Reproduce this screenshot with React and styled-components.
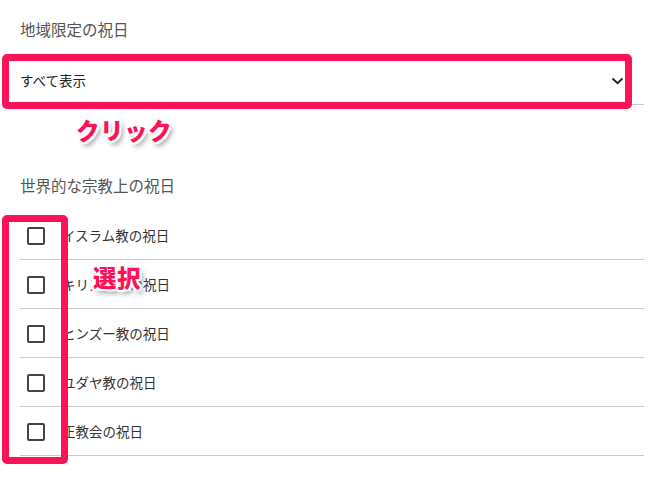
import React from 'react'
import styled, { createGlobalStyle } from 'styled-components'

const GlobalStyle = createGlobalStyle`
  body {
    margin: 0;
    background: #fff;
    font-family: "Noto Sans CJK JP", "Noto Sans", sans-serif;
  }
`

const PINK = '#ff1158'

const Page = styled.div`
  width: 648px;
  height: 478px;
  overflow: hidden;
`

const Form = styled.div`
  padding: 18px 4px 0 20px;
`

const Label = styled.div`
  font-size: 15.5px;
  line-height: 22px;
  color: #555;
  margin-top: ${p => p.top || 0}px;
`

// annotated blocks: the pink frame and note lie over them
const Annotated = styled.div`
  position: relative;
  margin-top: ${p => p.top || 0}px;
`

const Select = styled.div`
  display: flex;
  align-items: center;
  justify-content: space-between;
  height: 48px;
  border-bottom: 1px solid #ccc;
  font-size: 13.5px;
  color: #222;
`

const Chevron = styled.svg`
  width: 13px;
  height: 8px;
  margin-right: 20px;
  margin-top: 1px;
`

const Row = styled.label`
  display: flex;
  align-items: center;
  height: 48px;
  border-bottom: 1px solid #ccc;
  font-size: 13.5px;
  color: #333;
`

const Box = styled.span`
  box-sizing: border-box;
  width: 18px;
  height: 18px;
  margin: 2px 17px 0 7px;
  border: 2px solid #444;
  border-radius: 2px;
`

const Frame = styled.div`
  position: absolute;
  box-sizing: border-box;
  left: -18px;
  top: ${p => p.top}px;
  bottom: ${p => p.bottom}px;
  ${p => (p.w ? `width: ${p.w}px;` : `right: ${p.right}px;`)}
  border: 7.5px solid ${PINK};
  border-radius: 5px;
  pointer-events: none;
`

const Note = styled.div`
  position: absolute;
  left: ${p => p.x}px;
  top: ${p => p.y}px;
  font-size: 23.5px;
  font-weight: 900;
  line-height: 1;
  color: ${PINK};
  letter-spacing: 0.5px;
  white-space: nowrap;
  text-shadow:
    -2px -2px 0 #fff, 2px -2px 0 #fff, -2px 2px 0 #fff, 2px 2px 0 #fff,
    0 -2px 0 #fff, 0 2px 0 #fff, -2px 0 0 #fff, 2px 0 0 #fff,
    3px 4px 5px rgba(0, 0, 0, 0.45);
`

const religions = [
  'イスラム教の祝日',
  'キリスト教の祝日',
  'ヒンズー教の祝日',
  'ユダヤ教の祝日',
  '正教会の祝日',
]

export default function App() {
  return (
    <Page>
      <GlobalStyle />
      <Form>
        <Label>地域限定の祝日</Label>
        <Annotated top={16}>
          <Select>
            <span>すべて表示</span>
            <Chevron viewBox="0 0 13 8">
              <path d="M1.5 1.5 L6.5 6.2 L11.5 1.5" fill="none" stroke="#222" strokeWidth="1.8" />
            </Chevron>
          </Select>
          <Frame top={-2} bottom={-4} right={12} />
          <Note x={56} y={63}>クリック</Note>
        </Annotated>
        <Label top={69}>世界的な宗教上の祝日</Label>
        <Annotated top={15}>
          {religions.map(r => (
            <Row key={r}>
              <Box />
              <span>{r}</span>
            </Row>
          ))}
          <Frame top={4} bottom={-8} w={66} />
          <Note x={73} y={55}>選択</Note>
        </Annotated>
      </Form>
    </Page>
  )
}
